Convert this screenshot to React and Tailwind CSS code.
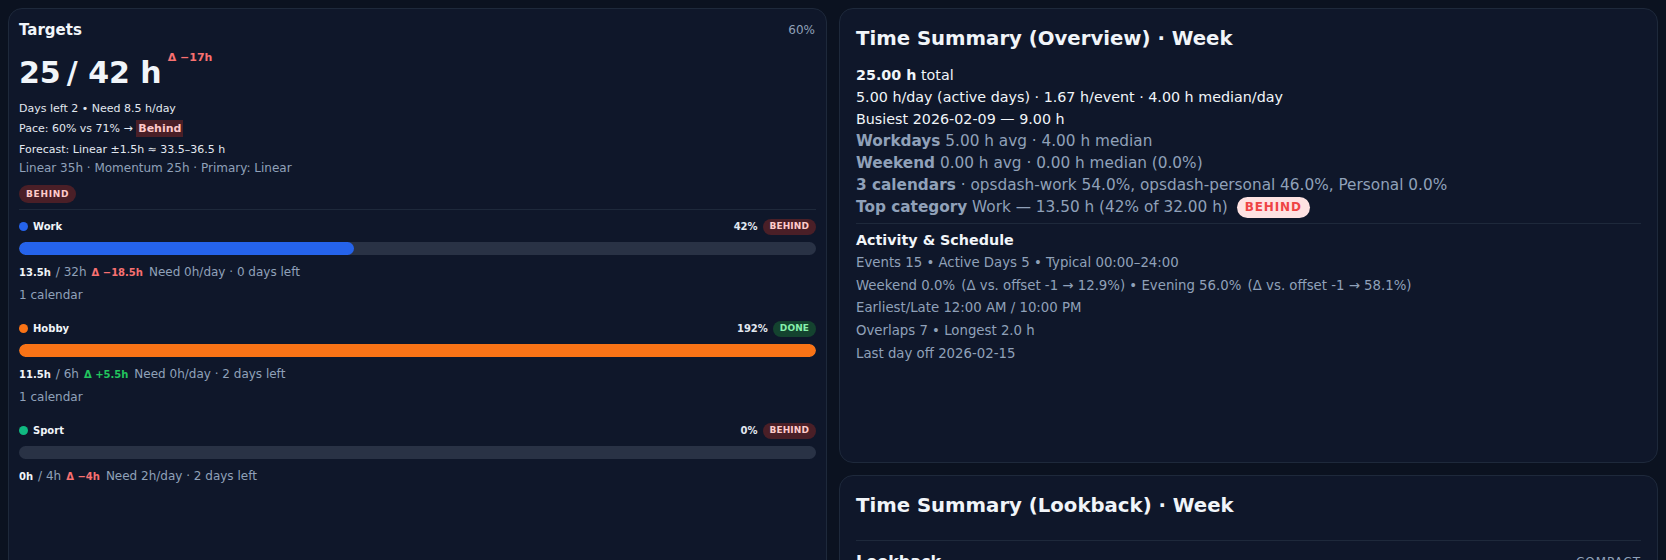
import React from "react";

const Badge = ({ children, tone = "behind", big = false }) => {
  const tones = {
    behind: "bg-[#4a1f27] text-[#fecaca]",
    done: "bg-[#14432f] text-[#86efac]",
  };
  return (
    <span
      className={`inline-flex items-center rounded-full px-[7px] text-[9px] font-bold leading-none ${
        big ? "h-[18px] tracking-[0.08em]" : "h-[16px] tracking-[0.01em]"
      } ${tones[tone]}`}
    >
      {children}
    </span>
  );
};

const TargetRow = ({ name, dot, bar, pct, width, status, done, target, delta, deltaTone, need, calendar }) => (
  <div className="flex flex-col">
    <div className="flex items-center justify-between h-[17px]">
      <div className="flex items-center gap-[5px]">
        <span className={`w-[9px] h-[9px] rounded-full ${dot}`} />
        <span className="text-[10px] font-bold text-slate-100">{name}</span>
      </div>
      <div className="flex items-center gap-[5px]">
        <span className="text-[10px] font-bold text-slate-200">{pct}</span>
        <Badge tone={status === "DONE" ? "done" : "behind"}>{status}</Badge>
      </div>
    </div>
    <div className="mt-[7px] h-[13px] rounded-full bg-[#293245] overflow-hidden">
      <div className={`h-full rounded-full ${bar}`} style={{ width }} />
    </div>
    <div className="mt-[8px] flex items-baseline gap-[5px] text-[12px] leading-[18px] text-slate-400">
      <span className="text-[10px] font-bold text-slate-100">{done}</span>
      <span>/ {target}</span>
      <span className={`text-[10px] font-bold ${deltaTone}`}>{delta}</span>
      <span className="ml-[1px]">{need}</span>
    </div>
    {calendar && <div className="mt-[4px] text-[12px] leading-[18px] text-slate-400">{calendar}</div>}
  </div>
);

const Targets = () => (
  <div className="rounded-[14px] border border-[#1e293b] bg-[#0f172a] px-[10px] pt-[9px] pb-4 min-h-[600px]">
    <div className="flex items-center justify-between">
      <h2 className="text-[15px] font-bold text-slate-100 leading-[24px]">Targets</h2>
      <span className="text-[12px] text-slate-400 mr-[1px]">60%</span>
    </div>
    <div className="mt-[11px] flex items-start">
      <span className="text-[30px] font-bold text-slate-100 leading-[40px]">25</span>
      <span className="text-[30px] font-bold text-slate-100 leading-[40px] ml-[6px]">/ 42 h</span>
      <span className="ml-[6px] mt-[-3px] text-[11px] font-bold text-[#f87171]">Δ −17h</span>
    </div>
    <div className="mt-[6px] text-[11px] text-slate-200 leading-[20px]">Days left 2 • Need 8.5 h/day</div>
    <div className="text-[11px] text-slate-200 leading-[20px]">
      Pace: 60% vs 71% → <span className="bg-[#4a1f27] text-[#fecaca] font-bold px-[2px] py-[2px]">Behind</span>
    </div>
    <div className="text-[11px] text-slate-200 leading-[22px]">Forecast: Linear ±1.5h ≈ 33.5–36.5 h</div>
    <div className="text-[12px] text-slate-400 leading-[14px]">Linear 35h · Momentum 25h · Primary: Linear</div>
    <div className="mt-[10px] flex">
      <Badge big>BEHIND</Badge>
    </div>
    <div className="mt-[6px] border-t border-[#1e293b]" />
    <div className="mt-[8px] flex flex-col gap-[16px]">
      <TargetRow name="Work" dot="bg-[#2563eb]" bar="bg-[#2563eb]" pct="42%" width="42%" status="BEHIND" done="13.5h" target="32h" delta="Δ −18.5h" deltaTone="text-[#f87171]" need="Need 0h/day · 0 days left" calendar="1 calendar" />
      <TargetRow name="Hobby" dot="bg-[#f97316]" bar="bg-[#f97316]" pct="192%" width="100%" status="DONE" done="11.5h" target="6h" delta="Δ +5.5h" deltaTone="text-[#22c55e]" need="Need 0h/day · 2 days left" calendar="1 calendar" />
      <TargetRow name="Sport" dot="bg-[#10b981]" bar="bg-[#10b981]" pct="0%" width="0%" status="BEHIND" done="0h" target="4h" delta="Δ −4h" deltaTone="text-[#f87171]" need="Need 2h/day · 2 days left" />
    </div>
  </div>
);

const Overview = () => (
  <div className="h-[455px] rounded-[14px] border border-[#1e293b] bg-[#0f172a] px-4 pt-[14px]">
    <h2 className="text-[19.7px] font-bold text-slate-100 leading-[32px]">Time Summary (Overview) · Week</h2>
    <div className="mt-[9px] text-[14.3px] leading-[22px] text-slate-100">
      <div><span className="font-bold">25.00 h</span> total</div>
      <div>5.00 h/day (active days) · 1.67 h/event · 4.00 h median/day</div>
      <div>Busiest 2026-02-09 — 9.00 h</div>
    </div>
    <div className="text-[15.3px] leading-[22px] text-slate-400">
      <div><span className="font-bold">Workdays</span> 5.00 h avg · 4.00 h median</div>
      <div><span className="font-bold">Weekend</span> 0.00 h avg · 0.00 h median (0.0%)</div>
      <div><span className="font-bold">3 calendars</span> · opsdash-work 54.0%, opsdash-personal 46.0%, Personal 0.0%</div>
      <div className="flex items-center gap-[9px]">
        <span><span className="font-bold">Top category</span> Work — 13.50 h (42% of 32.00 h)</span>
        <span className="inline-flex items-center rounded-full bg-[#fee2e2] text-[#ef4444] px-[8px] h-[21px] text-[12px] font-bold tracking-[0.07em]">BEHIND</span>
      </div>
    </div>
    <div className="mt-[5px] border-t border-[#1e293b]" />
    <div className="mt-[6px] text-[14.3px] font-bold text-slate-100 leading-[20px]">Activity &amp; Schedule</div>
    <div className="mt-[2px] text-[13.3px] leading-[22.7px] text-slate-400">
      <div>Events 15 • Active Days 5 • Typical 00:00–24:00</div>
      <div>Weekend 0.0% <span className="ml-[2px]">(Δ vs. offset -1 → 12.9%)</span> • Evening 56.0% <span className="ml-[2px]">(Δ vs. offset -1 → 58.1%)</span></div>
      <div>Earliest/Late 12:00 AM / 10:00 PM</div>
      <div>Overlaps 7 • Longest 2.0 h</div>
      <div>Last day off 2026-02-15</div>
    </div>
  </div>
);

const Lookback = () => (
  <div className="rounded-[14px] border border-[#1e293b] bg-[#0f172a] px-4 pt-[14px] pb-4">
    <h2 className="text-[19.7px] font-bold text-slate-100 leading-[32px]">Time Summary (Lookback) · Week</h2>
    <div className="mt-[18px] border-t border-[#1e293b]" />
    <div className="mt-[9px] flex items-center justify-between">
      <span className="text-[16px] font-bold text-slate-100">Lookback</span>
      <span className="text-[12px] uppercase tracking-[0.08em] text-slate-400">Compact</span>
    </div>
    <div className="mt-2 text-[13.3px] leading-[22px] text-slate-400">
      <div>Previous week 21.50 h · Δ +3.50 h</div>
      <div>Two weeks ago 19.00 h · Δ +6.00 h</div>
    </div>
  </div>
);

const App = () => (
  <div className="min-h-screen bg-[#0b1220] p-2 font-['DejaVu_Sans',sans-serif]">
    <div className="grid grid-cols-2 gap-3">
      <Targets />
      <div className="flex flex-col gap-3">
        <Overview />
        <Lookback />
      </div>
    </div>
  </div>
);

export default App;
